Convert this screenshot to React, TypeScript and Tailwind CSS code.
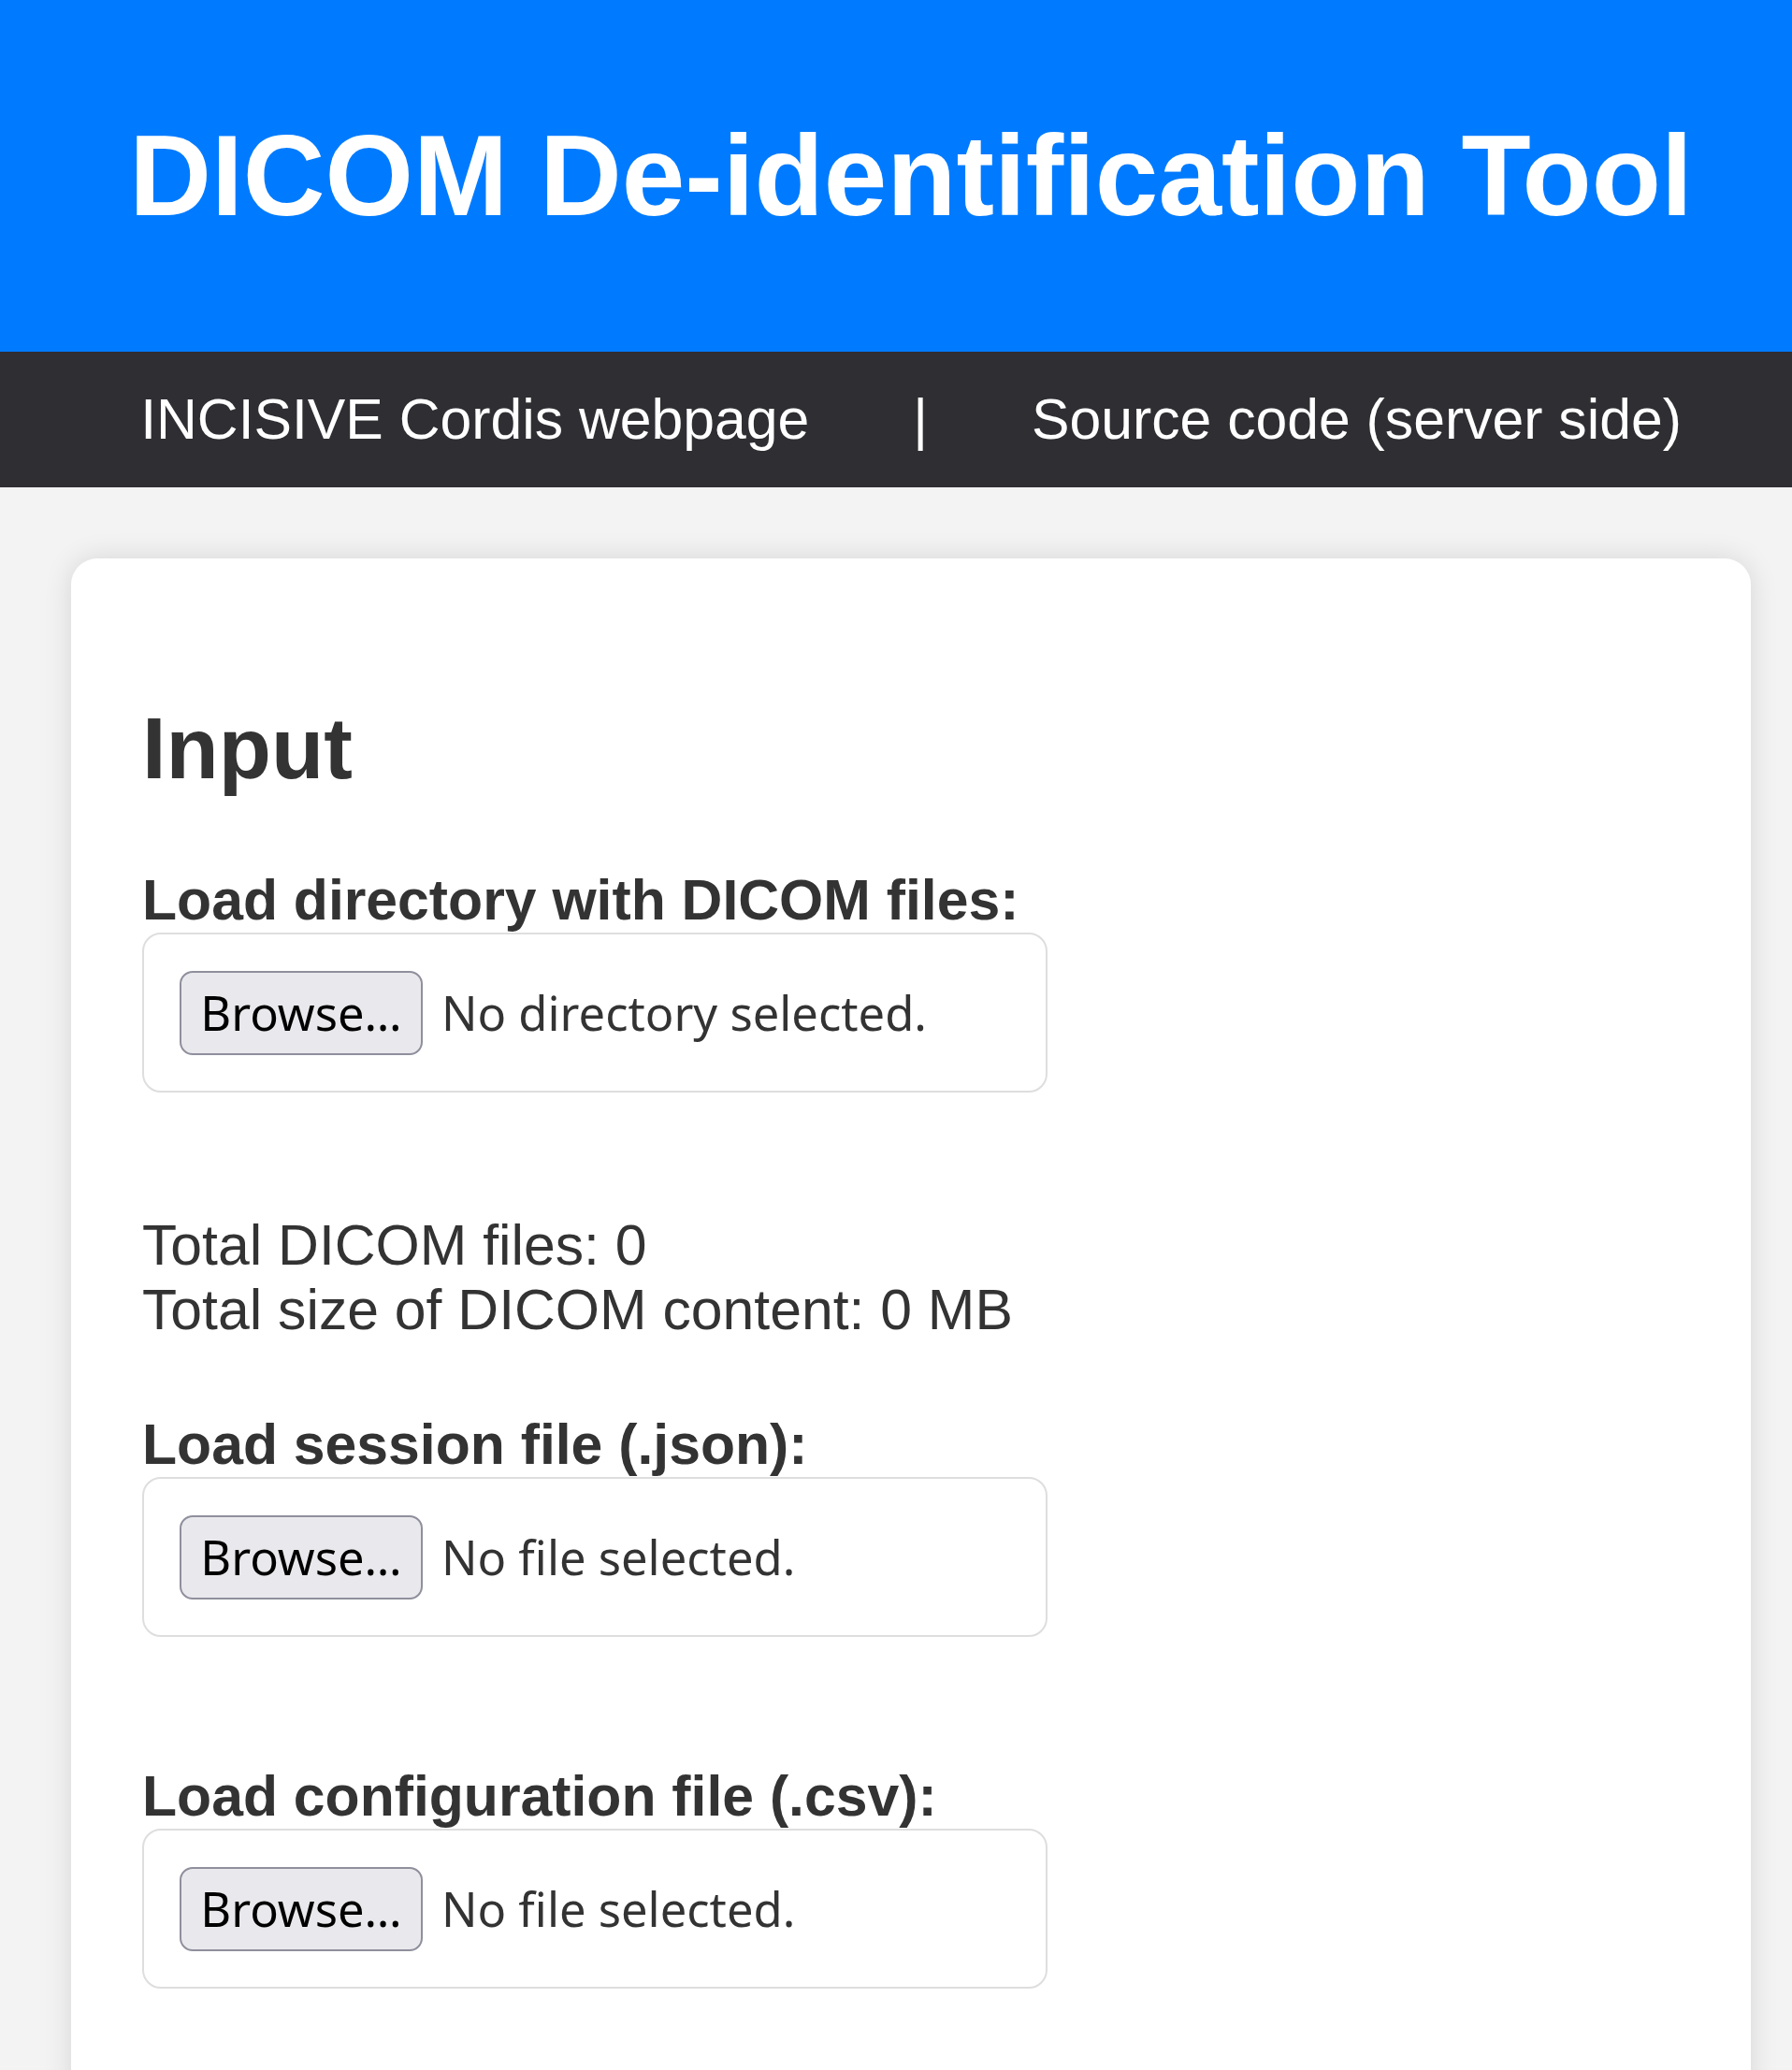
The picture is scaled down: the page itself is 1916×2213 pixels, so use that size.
import React from "react";

function FileField({ label, status, className }: { label: string; status: string; className: string }) {
  return (
    <div className={className}>
      <div className="text-[60.7px] font-bold leading-[69px] text-[#333333]">{label}</div>
      <div className="flex h-[171px] w-[968px] items-center rounded-[20px] border-2 border-[#dedede] bg-white px-[38px]">
        <button
          type="button"
          className="flex h-[90px] w-[260px] items-center justify-center rounded-[14px] border-2 border-[#8f8f9d] bg-[#e9e9ed] font-['Noto_Sans','Open_Sans',sans-serif] text-[50.7px] leading-[68px] text-black"
        >
          Browse…
        </button>
        <span className="ml-[20px] font-['Noto_Sans','Open_Sans',sans-serif] text-[50.7px] leading-[68px] text-[#333333]">
          {status}
        </span>
      </div>
    </div>
  );
}

export default function App() {
  return (
    <div className="min-h-[2213px] overflow-hidden bg-[#f3f3f3] font-['Liberation_Sans',Arial,sans-serif]">
      <div className="w-[1948px]">
        <header className="bg-[#007bff] py-[119px] text-center">
          <h1 className="text-[121.5px] font-bold leading-[138px] text-white">DICOM De-identification Tool</h1>
        </header>
        <nav className="flex justify-center gap-[111px] bg-[#2f2e33] py-[38px] text-[60.7px] leading-[69px] text-white">
          <a href="#" className="text-white">INCISIVE Cordis webpage</a>
          <span>|</span>
          <a href="#" className="text-white">Source code (server side)</a>
        </nav>
        <main className="px-[76px] pt-[76px]">
          <div className="min-h-[1700px] rounded-[28px] bg-white px-[76px] pb-[200px] pt-[150px] shadow-[0_0_30px_rgba(0,0,0,0.12)]">
            <h2 className="text-[92px] font-bold leading-[106px] text-[#333333]">Input</h2>
            <FileField className="mt-[75px]" label="Load directory with DICOM files:" status="No directory selected." />
            <div className="mt-[129px] text-[60.7px] leading-[69px] text-[#333333]">
              <div>Total DICOM files: 0</div>
              <div>Total size of DICOM content: 0 MB</div>
            </div>
            <FileField className="mt-[75px]" label="Load session file (.json):" status="No file selected." />
            <FileField className="mt-[136px]" label="Load configuration file (.csv):" status="No file selected." />
          </div>
        </main>
      </div>
    </div>
  );
}
